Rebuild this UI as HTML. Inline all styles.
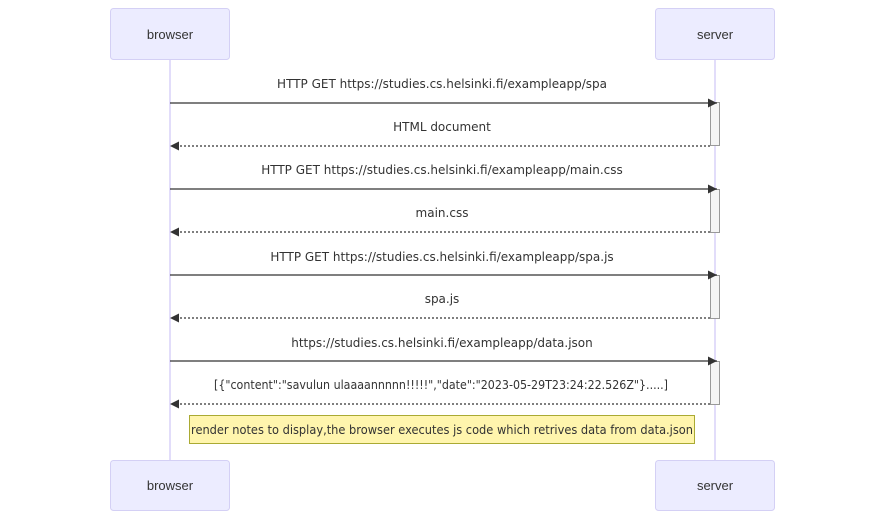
<!DOCTYPE html>
<html><head><meta charset="utf-8"><style>
html,body{margin:0;padding:0;background:#fff;}
svg{display:block;font-family:"Liberation Sans","DejaVu Sans",sans-serif;}
.m{font-family:"DejaVu Sans","Liberation Sans",sans-serif;}
</style></head><body>
<svg width="885" height="520" viewBox="0 0 885 520" xmlns="http://www.w3.org/2000/svg">
<defs>
<marker id="ah" markerWidth="12" markerHeight="12" refX="9" refY="4.5" orient="auto" markerUnits="userSpaceOnUse"><path d="M0,0 L9,4.5 L0,9 z" fill="#333"/></marker>
</defs>
<g stroke="#d9d2f9" stroke-width="1.5">
<line x1="170" y1="60" x2="170" y2="460"/>
<line x1="715" y1="60" x2="715" y2="460"/>
</g>
<g fill="#ececff" stroke="#d4d0f5" stroke-width="1">
<rect x="110.5" y="8.5" width="119" height="51" rx="3"/>
<rect x="655.5" y="8.5" width="119" height="51" rx="3"/>
<rect x="110.5" y="460.5" width="119" height="50" rx="3"/>
<rect x="655.5" y="460.5" width="119" height="50" rx="3"/>
</g>
<g font-size="13" fill="#333" text-anchor="middle">
<text x="170" y="39">browser</text>
<text x="715" y="39">server</text>
<text x="170" y="490">browser</text>
<text x="715" y="490">server</text>
</g>
<g fill="#f4f4f4" stroke="#999" stroke-width="1">
<rect x="710.5" y="102.5" width="9" height="43"/>
<rect x="710.5" y="189.5" width="9" height="43"/>
<rect x="710.5" y="275.5" width="9" height="43"/>
<rect x="710.5" y="361.5" width="9" height="43"/>
</g>
<g stroke="#333" stroke-width="1.2" fill="none">
<line x1="170" y1="103" x2="717" y2="103" marker-end="url(#ah)"/>
<line x1="710" y1="146" x2="170" y2="146" stroke-dasharray="2,2" marker-end="url(#ah)"/>
<line x1="170" y1="189" x2="717" y2="189" marker-end="url(#ah)"/>
<line x1="710" y1="232" x2="170" y2="232" stroke-dasharray="2,2" marker-end="url(#ah)"/>
<line x1="170" y1="275" x2="717" y2="275" marker-end="url(#ah)"/>
<line x1="710" y1="318" x2="170" y2="318" stroke-dasharray="2,2" marker-end="url(#ah)"/>
<line x1="170" y1="361" x2="717" y2="361" marker-end="url(#ah)"/>
<line x1="710" y1="404" x2="170" y2="404" stroke-dasharray="2,2" marker-end="url(#ah)"/>
</g>
<g class="m" font-size="12" fill="#333" text-anchor="middle">
<text x="442" y="88">HTTP GET https://studies.cs.helsinki.fi/exampleapp/spa</text>
<text x="442" y="131">HTML document</text>
<text x="442" y="174">HTTP GET https://studies.cs.helsinki.fi/exampleapp/main.css</text>
<text x="442" y="217">main.css</text>
<text x="442" y="261">HTTP GET https://studies.cs.helsinki.fi/exampleapp/spa.js</text>
<text x="442" y="303">spa.js</text>
<text x="442" y="347">https://studies.cs.helsinki.fi/exampleapp/data.json</text>
<text x="441" y="389" textLength="454" lengthAdjust="spacingAndGlyphs">[{"content":"savulun ulaaaannnnn!!!!!","date":"2023-05-29T23:24:22.526Z"}.....]</text>
</g>
<rect x="189.5" y="415.5" width="505" height="28" fill="#fff5ad" stroke="#aaaa33"/>
<text class="m" x="442" y="434" font-size="12" fill="#333" text-anchor="middle" textLength="502" lengthAdjust="spacingAndGlyphs">render notes to display,the browser executes js code which retrives data from data.json</text>
</svg>
</body></html>
